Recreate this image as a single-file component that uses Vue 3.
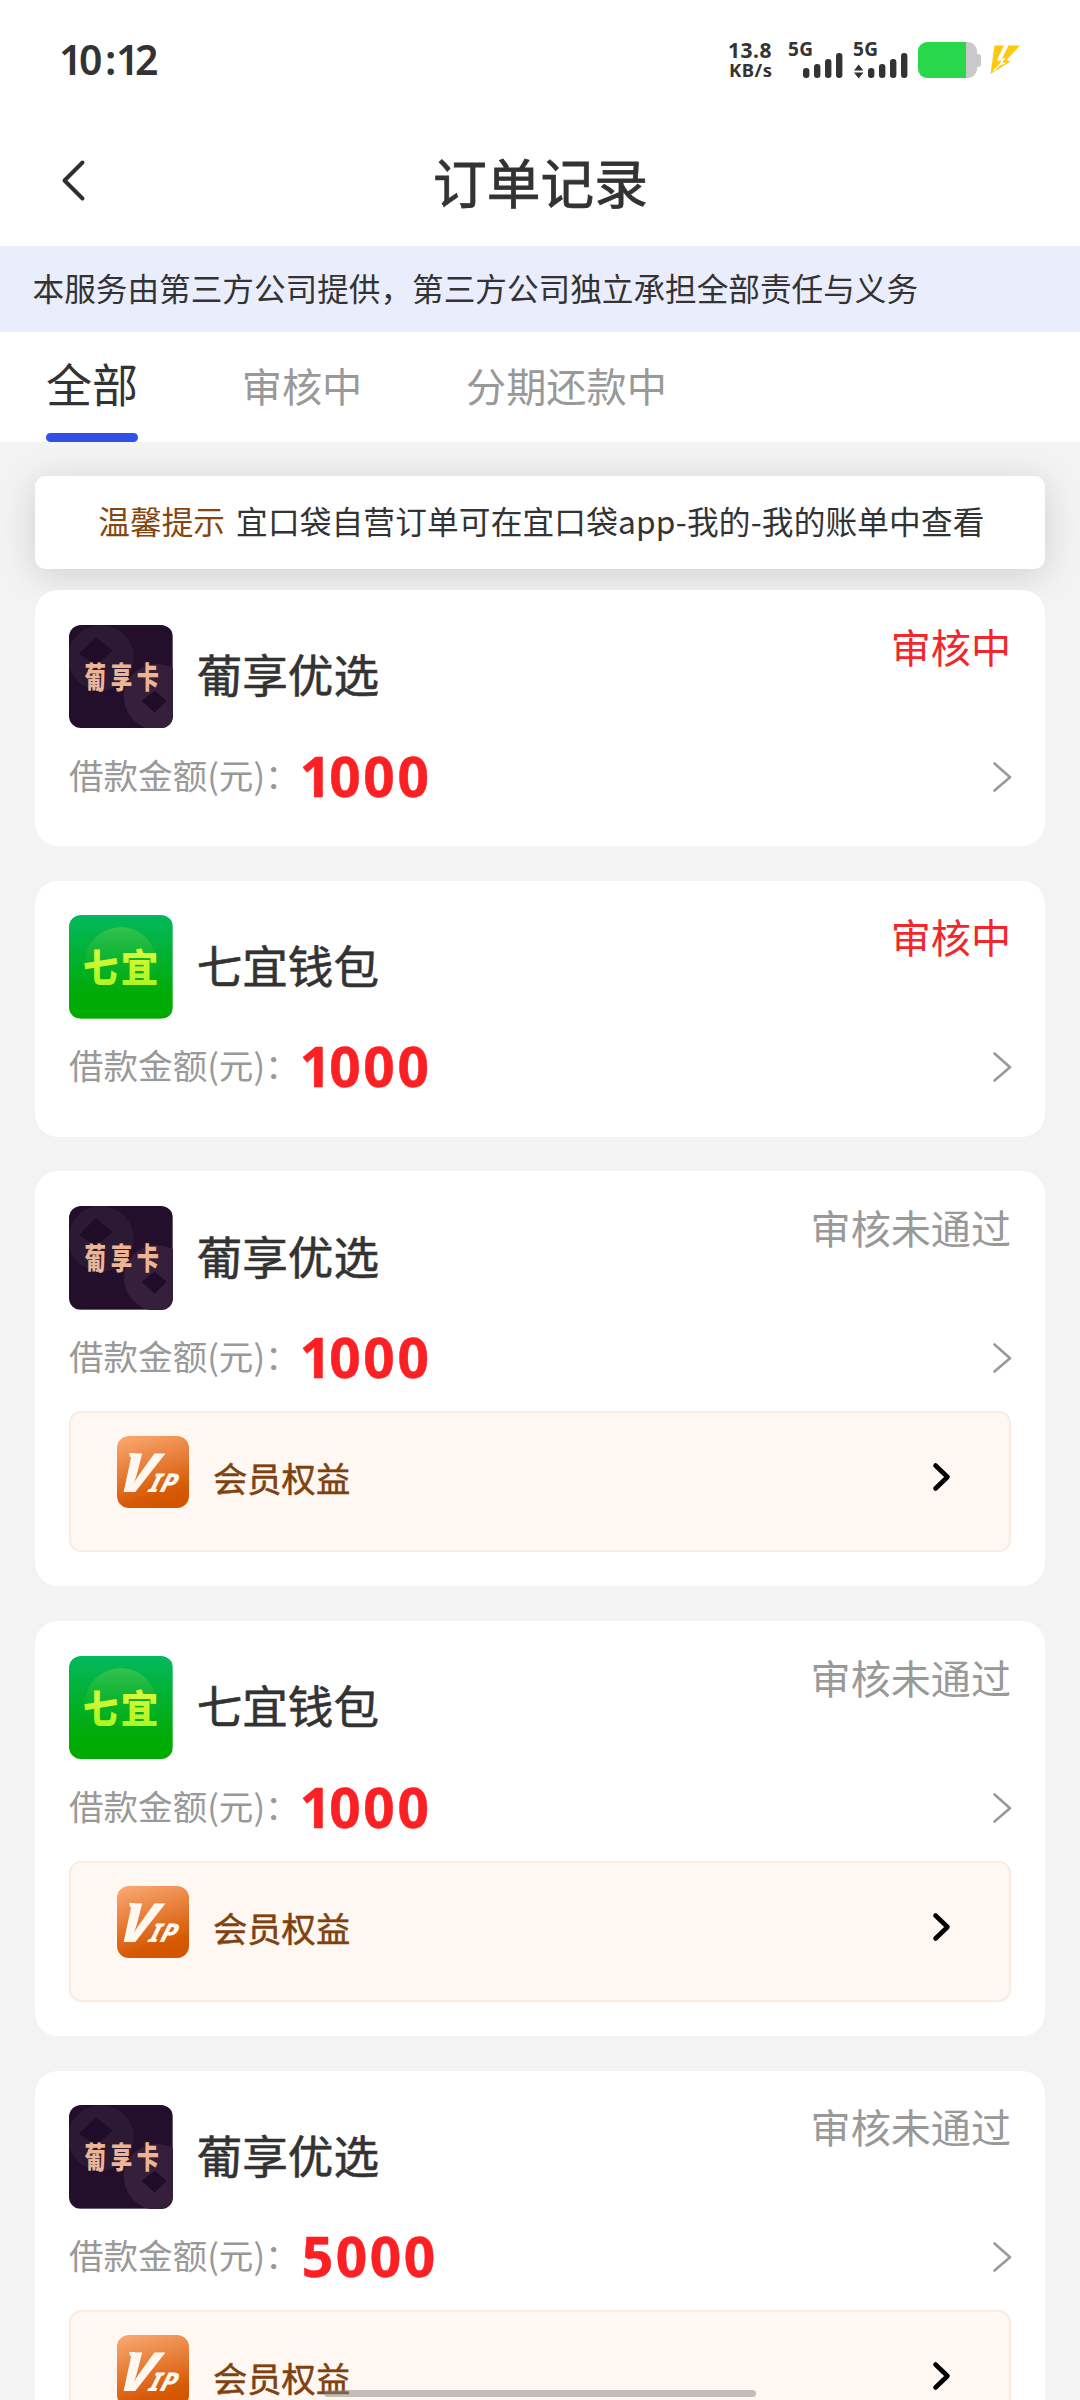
<script setup>
const tabs = ['全部', '审核中', '分期还款中']
const orders = [
  { brand: 'px', name: '葡享优选', status: '审核中', pending: true, amount: '1000', vip: false },
  { brand: 'qy', name: '七宜钱包', status: '审核中', pending: true, amount: '1000', vip: false },
  { brand: 'px', name: '葡享优选', status: '审核未通过', pending: false, amount: '1000', vip: true },
  { brand: 'qy', name: '七宜钱包', status: '审核未通过', pending: false, amount: '1000', vip: true },
  { brand: 'px', name: '葡享优选', status: '审核未通过', pending: false, amount: '5000', vip: true },
]
</script>

<template>
  <div class="screen">
    <header class="status-bar">
      <svg class="clock" width="110" height="70" viewBox="0 -10 110 70">
        <text y="39.5" x="-1 19 45 56 75">10:12</text>
      </svg>
      <svg class="indicators" width="300" height="70" viewBox="725 25 300 70">
        <g fill="#333">
          <text class="ind" x="728" y="57.5" font-size="21" textLength="43.5">13.8</text>
          <text class="ind" x="729" y="77" font-size="18.5" textLength="43">KB/s</text>
          <text class="ind" x="788" y="56" font-size="19" textLength="25">5G</text>
          <text class="ind" x="853" y="56" font-size="19" textLength="25">5G</text>
          <rect x="803" y="68" width="6.4" height="10" rx="3" />
          <rect x="814" y="64" width="6.4" height="14" rx="3" />
          <rect x="825" y="59" width="6.4" height="19" rx="3" />
          <rect x="836" y="53" width="6.4" height="25" rx="3" />
          <path d="M854 70.5l4.7-6 4.7 6zM854 72.500l4.7 6 4.7-6z" />
          <rect x="868" y="68" width="6.4" height="10" rx="3" />
          <rect x="879" y="64" width="6.4" height="14" rx="3" />
          <rect x="890" y="59" width="6.4" height="19" rx="3" />
          <rect x="901" y="53" width="6.4" height="25" rx="3" />
        </g>
        <rect x="940" y="42" width="37" height="36" rx="9" fill="#c9c9c9" />
        <rect x="974" y="54" width="7" height="13" rx="3" fill="#c9c9c9" />
        <path d="M966 42v36h-39a9 9 0 0 1-9-9V51a9 9 0 0 1 9-9z" fill="#28d84a" />
        <path d="M994.500 45.500h9.500L997 60l5 -1.500L1008.500 45.500h11.500L1006.500 60l4 1.500L990.500 74z" fill="#fcc90f" />
        <path d="M1006 45l-7.500 15.500 5.500-1.500-4.500 6 6-2M993.500 71l9.500-9.500" stroke="#fff" stroke-width="1.300" fill="none" />
      </svg>
    </header>

    <nav class="nav">
      <svg class="back" width="28" height="44" viewBox="0 0 28 44">
        <path d="M23.500 3.500L5.500 21.500l18 18" fill="none" stroke="#303030" stroke-width="4" stroke-linecap="round" stroke-linejoin="round" />
      </svg>
      <h1>订单记录</h1>
      <span class="nav-side"></span>
    </nav>

    <div class="notice">本服务由第三方公司提供，第三方公司独立承担全部责任与义务</div>

    <div class="tabs">
      <div v-for="(t, i) in tabs" :key="t" class="tab" :class="{ active: i === 0 }">{{ t }}</div>
    </div>

    <main class="list">
      <div class="tip"><b>温馨提示</b><span>宜口袋自营订单可在宜口袋app-我的-我的账单中查看</span></div>

      <section v-for="(o, i) in orders" :key="i" class="card">
        <div class="head">
          <svg v-if="o.brand === 'px'" class="logo" viewBox="0 0 104 104">
            <rect width="104" height="104" fill="#230f2b" />
            <circle cx="32" cy="33" r="33" fill="#2c1934" />
            <circle cx="88" cy="72" r="33" fill="#351f3a" />
            <path d="M27 12l17 14-17 14-17-11zM86 66l12 10-12 12-13-12z" fill="#1f0c28" />
            <g class="px-text">
              <text transform="translate(15.500 63) scale(.72 1)">葡</text>
              <text transform="translate(42 63) scale(.72 1)">享</text>
              <text transform="translate(68 63) scale(.74 1)">卡</text>
            </g>
          </svg>
          <svg v-else class="logo" viewBox="0 0 104 104">
            <defs>
              <linearGradient id="qyBg" x1="0" y1="0" x2="0" y2="1">
                <stop offset="0" stop-color="#03b85e" />
                <stop offset=".75" stop-color="#01ab08" />
                <stop offset="1" stop-color="#00ab00" />
              </linearGradient>
              <linearGradient id="qyOrb" x1="0" y1="0" x2="0" y2="1">
                <stop offset="0" stop-color="#55c94e" stop-opacity=".6" />
                <stop offset=".8" stop-color="#16b020" stop-opacity="0" />
              </linearGradient>
              <linearGradient id="qyText" x1="0" y1="0" x2="0" y2="1">
                <stop offset="0" stop-color="#ecfb42" />
                <stop offset="1" stop-color="#a2f41c" />
              </linearGradient>
            </defs>
            <rect width="104" height="104" fill="url(#qyBg)" />
            <circle cx="52" cy="48" r="36" fill="url(#qyOrb)" />
            <g class="qy-text" fill="url(#qyText)">
              <text transform="translate(14 67.500) scale(.9 1)">七</text>
              <text transform="translate(52 67.500) scale(.97 1)">宜</text>
            </g>
          </svg>
          <span class="name">{{ o.name }}</span>
          <span class="status" :class="{ pending: o.pending }">{{ o.status }}</span>
        </div>

        <div class="row">
          <span class="label">借款金额(元)：</span>
          <span class="amount"><i :class="{ one: o.amount[0] === '1' }">{{ o.amount[0] }}</i>{{ o.amount.slice(1) }}</span>
          <svg class="more" width="20" height="32" viewBox="0 0 20 32">
            <path d="M2.500 2.500L18 16.300 2.500 29.500" fill="none" stroke="#999" stroke-width="2.600" stroke-linecap="round" stroke-linejoin="round" />
          </svg>
        </div>

        <div v-if="o.vip" class="vip">
          <svg class="vip-icon" width="72" height="72" viewBox="0 0 72 72">
            <defs>
              <linearGradient id="vipBg" x1=".2" y1="0" x2=".5" y2="1">
                <stop offset="0" stop-color="#f9a56e" />
                <stop offset=".85" stop-color="#d65a06" />
                <stop offset="1" stop-color="#d45500" />
              </linearGradient>
            </defs>
            <rect width="72" height="72" rx="12" fill="url(#vipBg)" />
            <path d="M12 17h6v4h-5z" fill="#fff8f0" />
            <text class="v" transform="translate(0 56) skewX(-16)" x="0 31 42">V<tspan class="ip">IP</tspan></text>
          </svg>
          <span class="vip-text">会员权益</span>
          <svg class="vip-more" width="20" height="30" viewBox="0 0 20 30">
            <path d="M3.500 3.500L15.500 15 3.500 26.500" fill="none" stroke="#000" stroke-width="4.600" stroke-linecap="round" stroke-linejoin="round" />
          </svg>
        </div>
      </section>
    </main>

    <div class="home-bar"></div>
  </div>
</template>

<style>
body { margin: 0; }
</style>

<style scoped>
.screen {
  position: relative;
  width: 1080px;
  height: 2400px;
  overflow: hidden;
  background: #f3f3f3;
  color: #333;
  font-family: "Noto Sans CJK SC", sans-serif;
}
.status-bar {
  display: flex;
  justify-content: space-between;
  height: 95px;
  padding: 25px 55px 0 60px;
  box-sizing: border-box;
  background: #fff;
}
.clock { overflow: visible; }
.clock text {
  font: 600 41px "Noto Sans", sans-serif;
  fill: #333;
}
.ind { font-family: "Noto Sans", sans-serif; font-weight: 700; }
.nav {
  display: flex;
  align-items: center;
  justify-content: space-between;
  height: 151px;
  padding: 21px 59px 0 59px;
  box-sizing: border-box;
  background: #fff;
}
.nav h1 {
  margin: -1px 0 0 1px;
  font-size: 53.700px;
  line-height: 80px;
  font-weight: 400;
  -webkit-text-stroke: .8px #333;
}
.nav-side { width: 28px; }
.notice {
  height: 86px;
  padding-left: 32.500px;
  background: #eaedfc;
  font-size: 31.640px;
  line-height: 83px;
  white-space: nowrap;
}
.tabs {
  display: flex;
  align-items: stretch;
  gap: 103.700px;
  height: 110px;
  padding-left: 46px;
  background: #fff;
}
.tab {
  box-sizing: border-box;
  font-size: 40.200px;
  line-height: 106px;
  color: #999;
}
.tab.active {
  display: flex;
  flex-direction: column;
  width: 92px;
  white-space: nowrap;
  font-size: 46px;
  line-height: 101px;
  color: #333;
}
.tab.active::after {
  content: "";
  height: 9px;
  border-radius: 4.500px;
  background: #3050e8;
}
.list {
  display: flex;
  flex-direction: column;
  padding: 34px 35px 0 35px;
}
.tip {
  display: flex;
  justify-content: center;
  align-items: center;
  gap: 11px;
  height: 93px;
  margin-bottom: 21px;
  border-radius: 11px;
  background: #fff;
  box-shadow: 0 6px 36px rgba(0, 0, 0, .15);
  font-size: 31.680px;
  line-height: 46px;
  padding: 0 0 6px 3px;
  box-sizing: border-box;
  white-space: nowrap;
}
.tip b { font-weight: 400; color: #854611; }
.tip span { letter-spacing: .16px; }
.card {
  position: relative;
  margin-bottom: 34.560px;
  padding: 34.560px 34px;
  border-radius: 23px;
  background: #fff;
}
.head {
  display: flex;
  align-items: center;
  height: 103.680px;
}
.logo {
  flex: none;
  width: 103.680px;
  height: 103.680px;
  border-radius: 12px;
}
.px-text {
  fill: #ecb595;
  font-size: 30px;
  font-weight: 900;
}
.qy-text {
  font-size: 39px;
  font-weight: 900;
}
.name {
  margin: -6px 0 0 24px;
  font-size: 45.600px;
  line-height: 64px;
  font-weight: 400;
  -webkit-text-stroke: .6px #333;
}
.status {
  align-self: flex-start;
  margin-left: auto;
  font-size: 40.100px;
  line-height: 42px;
  color: #999;
}
.status.pending { color: #f2272b; }
.row {
  display: flex;
  align-items: center;
  height: 70px;
  margin-top: 13.400px;
}
.label {
  font-size: 34.560px;
  line-height: 48px;
  color: #999;
  margin-top: -6px;
}
.amount {
  margin: -2px 0 0 2px;
  font: 700 55px/70px "Noto Sans", sans-serif;
  -webkit-text-stroke: .5px #fb2024;
  letter-spacing: 2.600px;
  color: #fb2024;
}
.amount i { font-style: normal; }
.amount i.one { margin-left: -2px; letter-spacing: -1.800px; }
.more { margin: 0 -1px 0 auto; }
.vip {
  display: flex;
  align-items: flex-start;
  box-sizing: border-box;
  height: 141px;
  margin-top: 17.900px;
  padding: 23px 60px 0 46px;
  border: 2px solid #f9ece2;
  border-radius: 12px;
  background: #fff8f2;
}
.vip-icon { overflow: visible; }
.vip-text {
  margin: 17.500px 0 0 24px;
  font-size: 34.300px;
  line-height: 48px;
  font-weight: 400;
  -webkit-text-stroke: .5px #7d420f;
  color: #7d420f;
}
.vip-more { margin: 26px -2.500px 0 auto; }
.v {
  font: italic 900 54px "Noto Sans", sans-serif;
  fill: #fff8f0;
}
.ip {
  font: italic 800 26px "Noto Sans", sans-serif;
}
.home-bar {
  position: absolute;
  left: 324px;
  bottom: 3px;
  width: 432px;
  height: 7px;
  border-radius: 4px;
  background: rgba(138, 128, 124, .5);
}
</style>
